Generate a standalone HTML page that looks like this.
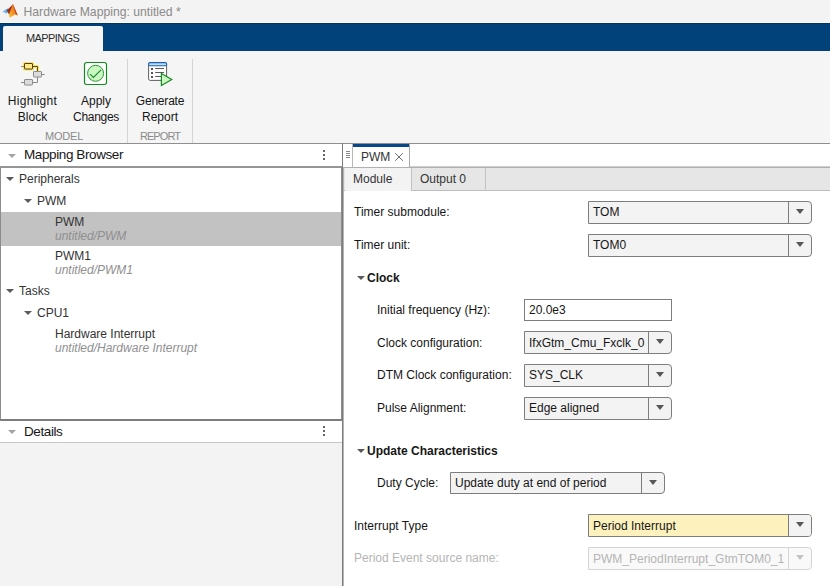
<!DOCTYPE html>
<html><head><meta charset="utf-8">
<style>
*{margin:0;padding:0;box-sizing:border-box}
html,body{width:830px;height:586px;overflow:hidden;background:#f5f5f5;font-family:"Liberation Sans",sans-serif;color:#161616}
.a{position:absolute}
.t{position:absolute;font-size:12px;line-height:14px;white-space:nowrap}
.c{text-align:center}
.tri{position:absolute;width:0;height:0;border-left:4px solid transparent;border-right:4px solid transparent;border-top:4px solid #5a5a5a}
.dd{position:absolute;height:23px;background:#f3f3f3;border:1px solid #7d7d7d;border-radius:0 4px 4px 0}
.dd .dv{position:absolute;top:0;bottom:0;left:auto;width:1px;background:#7d7d7d}
.dd .tr{position:absolute;top:7px;width:0;height:0;border-left:4px solid transparent;border-right:4px solid transparent;border-top:5px solid #575757}
.dd .tx{position:absolute;left:4px;top:3px;font-size:12px;line-height:14px;white-space:nowrap}
.dots{position:absolute;width:2px;height:2px;background:#666;box-shadow:0 4px 0 #666,0 8px 0 #666}
</style></head><body>
<!-- title bar -->
<div class="a" style="left:0;top:0;width:830px;height:22px;background:#f3f3f3"></div>
<svg class="a" style="left:0px;top:0px" width="20" height="20" viewBox="0 0 20 20">
  <defs>
    <linearGradient id="g1" x1="0" y1="1" x2="1" y2="0"><stop offset="0" stop-color="#fbc02d"/><stop offset="0.5" stop-color="#f08a24"/><stop offset="1" stop-color="#d2451c"/></linearGradient>
    <linearGradient id="g2" x1="0" y1="0" x2="1" y2="0"><stop offset="0" stop-color="#8fd0f5"/><stop offset="1" stop-color="#3d8fd0"/></linearGradient>
  </defs>
  <path d="M2.2 11.6 L7.5 8.6 L9.6 10.6 L6.5 13.6 Z" fill="url(#g2)"/>
  <path d="M6.8 10.2 L10.8 6.6 L13 4 L10.6 12.5 L9 14.5 Z" fill="#9c2f1e"/>
  <path d="M9 14.5 L13 4 L15.2 10 L17.8 15.6 L15.2 14.4 L9.6 17.8 Z" fill="url(#g1)"/>
  <path d="M13 4 L17.8 15.6 L15.6 13.8 Z" fill="#c2391b"/>
</svg>
<div class="t" style="left:23.5px;top:5px;color:#8a8a8a;font-size:12.2px">Hardware Mapping: untitled *</div>

<!-- blue toolstrip bar -->
<div class="a" style="left:0;top:22px;width:830px;height:1px;background:#fffdf9"></div>
<div class="a" style="left:0;top:23px;width:830px;height:28px;background:#02427a;border-top:1px solid #00346a"></div>
<div class="a" style="left:3px;top:26px;width:100px;height:25px;background:#f5f5f5;border-radius:2px 2px 0 0"></div>
<div class="t" style="left:26px;top:31px;font-size:11px;color:#2b2b2b;letter-spacing:-0.6px">MAPPINGS</div>

<!-- toolbar icons -->
<svg class="a" style="left:16px;top:56px" width="32" height="32" viewBox="0 0 32 32">
  <g stroke="#ffe23a" stroke-width="3" fill="none" stroke-linejoin="round" opacity="0.85">
    <rect x="8.5" y="7.5" width="8" height="5.5"/>
    <path d="M16.5 10.5 H21.5 V15.5"/>
  </g>
  <g stroke="#8a8a8a" stroke-width="1" fill="none">
    <path d="M5 10.5 H8.5"/><path d="M25.5 18.5 H28.7"/><path d="M5 26.5 H8.5"/>
    <path d="M21.5 21 V26.5 H16.5"/>
  </g>
  <path d="M16.5 10.5 H21.5 V15.5" stroke="#5e4b12" stroke-width="1" fill="none"/>
  <rect x="8.5" y="7.5" width="8" height="5.5" rx="0.5" fill="#ffe98c" stroke="#4e3f10" stroke-width="1"/>
  <rect x="17.5" y="15.5" width="8" height="5.5" rx="0.5" fill="#dcdcdc" stroke="#8c8c8c" stroke-width="1"/>
  <rect x="8.5" y="23.5" width="8" height="5.5" rx="0.5" fill="#dcdcdc" stroke="#8c8c8c" stroke-width="1"/>
</svg>
<div class="t c" style="left:2px;top:94px;width:61px;letter-spacing:0.3px">Highlight</div>
<div class="t c" style="left:2px;top:110px;width:61px">Block</div>

<svg class="a" style="left:80px;top:58px" width="32" height="32" viewBox="0 0 32 32">
  <rect x="4.5" y="4.5" width="22" height="22" rx="2.2" fill="#ffffff" stroke="#0f8a1c" stroke-width="1.15"/>
  <circle cx="15.6" cy="15.3" r="8" fill="#c9f8c1" stroke="#2a9838" stroke-width="1"/>
  <path d="M10.1 16.1 L13.4 19.4 L21 11.9" stroke="#17882a" stroke-width="1.1" fill="none"/>
</svg>
<div class="t c" style="left:66px;top:94px;width:60px">Apply</div>
<div class="t c" style="left:66px;top:110px;width:60px;letter-spacing:-0.3px">Changes</div>

<svg class="a" style="left:144px;top:58px" width="32" height="32" viewBox="0 0 32 32">
  <rect x="4.6" y="4.6" width="18" height="17.8" rx="1.6" fill="#ffffff" stroke="#5f5f5f" stroke-width="1"/>
  <rect x="4.6" y="4.6" width="18" height="3.2" rx="1.4" fill="#b9e1ff" stroke="#1f5fb0" stroke-width="1.1"/>
  <g fill="#555"><rect x="7" y="10" width="2" height="2"/><rect x="7" y="14" width="2" height="2"/><rect x="7" y="18" width="2" height="2"/></g>
  <g stroke="#5a5a5a" stroke-width="1"><path d="M11.2 10.5 H20"/><path d="M11.2 14.5 H20"/><path d="M11.2 18.5 H17.5"/></g>
  <path d="M17.4 15.4 L27.8 21.4 L17.4 27.5 Z" fill="#c9f8c1" stroke="#10891d" stroke-width="1.15" stroke-linejoin="miter"/>
</svg>
<div class="t c" style="left:129px;top:94px;width:62px;letter-spacing:-0.2px">Generate</div>
<div class="t c" style="left:129px;top:110px;width:62px">Report</div>

<div class="a" style="left:127px;top:59px;width:1px;height:84px;background:#d4d4d4"></div>
<div class="a" style="left:192px;top:59px;width:1px;height:84px;background:#d4d4d4"></div>
<div class="t c" style="left:2px;top:129px;width:124px;font-size:11px;color:#8a8a8a;letter-spacing:-0.2px">MODEL</div>
<div class="t c" style="left:128px;top:129px;width:64px;font-size:11px;color:#8a8a8a;letter-spacing:-0.9px">REPORT</div>

<!-- toolbar bottom line -->
<div class="a" style="left:0;top:143px;width:830px;height:1px;background:#8f8f8f"></div>

<!-- left pane -->
<div class="a" style="left:0;top:144px;width:342px;height:22px;background:#fff"></div>
<div class="tri" style="left:8px;top:154px;border-top-color:#a3a3a3"></div>
<div class="a" style="left:24px;top:147px;font-size:13.5px;line-height:16px;letter-spacing:-0.4px;white-space:nowrap">Mapping Browser</div>
<div class="dots" style="left:323px;top:150px"></div>

<div class="a" style="left:0;top:166px;width:343px;height:255px;background:#fff;border:1px solid #8c8c8c;border-top:2px solid #959595;border-bottom:2px solid #7d7d7d;border-right:2px solid #8c8c8c"></div>
<div class="tri" style="left:6px;top:177px"></div>
<div class="t" style="left:19px;top:172px;color:#333">Peripherals</div>
<div class="tri" style="left:24px;top:199px"></div>
<div class="t" style="left:37px;top:194px;color:#333">PWM</div>
<div class="a" style="left:1px;top:212px;width:340px;height:34px;background:#c2c2c2"></div>
<div class="t" style="left:55px;top:215px;color:#333">PWM</div>
<div class="t" style="left:55px;top:229px;color:#8f8f8f;font-style:italic">untitled/PWM</div>
<div class="t" style="left:55px;top:249px;color:#333">PWM1</div>
<div class="t" style="left:55px;top:263px;color:#8f8f8f;font-style:italic">untitled/PWM1</div>
<div class="tri" style="left:6px;top:289px"></div>
<div class="t" style="left:19px;top:284px;color:#333">Tasks</div>
<div class="tri" style="left:24px;top:311px"></div>
<div class="t" style="left:37px;top:306px;color:#333">CPU1</div>
<div class="t" style="left:55px;top:327px;color:#333">Hardware Interrupt</div>
<div class="t" style="left:55px;top:341px;color:#8f8f8f;font-style:italic">untitled/Hardware Interrupt</div>

<!-- details -->
<div class="a" style="left:0;top:421px;width:342px;height:21px;background:#fff"></div>
<div class="a" style="left:0;top:442px;width:342px;height:1px;background:#c8c8c8"></div>
<div class="tri" style="left:8px;top:430px;border-top-color:#a3a3a3"></div>
<div class="a" style="left:24px;top:424px;font-size:13.5px;line-height:16px;letter-spacing:-0.4px;white-space:nowrap">Details</div>
<div class="dots" style="left:323px;top:426px"></div>
<div class="a" style="left:0;top:443px;width:342px;height:143px;background:#f3f3f3"></div>

<!-- divider -->
<div class="a" style="left:342px;top:143px;width:1px;height:443px;background:#7c7c7c"></div>

<!-- right pane -->
<div class="a" style="left:343px;top:144px;width:487px;height:442px;background:#fff"></div>
<div class="a" style="left:346px;top:151px;width:4px;height:1px;background:#888;box-shadow:0 2px 0 #888,0 4px 0 #888,0 6px 0 #888"></div>
<div class="a" style="left:352px;top:144px;width:58px;height:23px;background:#fff;border-left:1px solid #b8b8b8;border-right:1px solid #a8a8a8"></div>
<div class="a" style="left:353px;top:144px;width:56px;height:3px;background:#084889"></div>
<div class="t" style="left:361px;top:150px;color:#333">PWM</div>
<svg class="a" style="left:394px;top:152px" width="10" height="10" viewBox="0 0 10 10"><path d="M1.2 1.2 L8.8 8.8 M8.8 1.2 L1.2 8.8" stroke="#5c5c5c" stroke-width="0.9"/></svg>
<div class="a" style="left:343px;top:167px;width:487px;height:1px;background:#b0b0b0"></div>
<div class="a" style="left:410px;top:166px;width:420px;height:1px;background:#cfcfcf"></div>

<!-- module tabs -->
<div class="a" style="left:344px;top:168px;width:486px;height:23px;background:#e6e6e6;border-bottom:1px solid #bdbdbd"></div>
<div class="a" style="left:345px;top:168px;width:67px;height:23px;background:#f3f3f3;border-right:1px solid #c2c2c2"></div>
<div class="a" style="left:485px;top:168px;width:1px;height:22px;background:#c2c2c2"></div>
<div class="t" style="left:353px;top:172px;color:#333">Module</div>
<div class="t" style="left:420px;top:172px;color:#333">Output 0</div>

<div class="a" style="left:343px;top:168px;width:1px;height:418px;background:#b4b4b4"></div>
<!-- form -->
<div class="t" style="left:354px;top:205px">Timer submodule:</div>
<div class="dd" style="left:588px;top:201px;width:224px"><div class="dv" style="left:199px"></div><div class="tr" style="left:207px"></div><div class="tx">TOM</div></div>
<div class="t" style="left:354px;top:238px">Timer unit:</div>
<div class="dd" style="left:588px;top:234px;width:224px"><div class="dv" style="left:199px"></div><div class="tr" style="left:207px"></div><div class="tx">TOM0</div></div>

<div class="tri" style="left:357px;top:276px"></div>
<div class="t" style="left:367px;top:271px;font-weight:bold">Clock</div>

<div class="t" style="left:377px;top:303px">Initial frequency (Hz):</div>
<div class="a" style="left:524px;top:299px;width:148px;height:22px;background:#fff;border:1px solid #7d7d7d"></div>
<div class="t" style="left:529px;top:303px">20.0e3</div>

<div class="t" style="left:377px;top:336px">Clock configuration:</div>
<div class="dd" style="left:524px;top:331px;width:148px"><div class="dv" style="left:123px"></div><div class="tr" style="left:131px"></div><div class="tx" style="overflow:hidden;width:118px;top:4px">IfxGtm_Cmu_Fxclk_0</div></div>

<div class="t" style="left:377px;top:368px">DTM Clock configuration:</div>
<div class="dd" style="left:524px;top:364px;width:148px"><div class="dv" style="left:123px"></div><div class="tr" style="left:131px"></div><div class="tx">SYS_CLK</div></div>

<div class="t" style="left:377px;top:401px">Pulse Alignment:</div>
<div class="dd" style="left:524px;top:397px;width:148px"><div class="dv" style="left:123px"></div><div class="tr" style="left:131px"></div><div class="tx">Edge aligned</div></div>

<div class="tri" style="left:357px;top:449px"></div>
<div class="t" style="left:367px;top:444px;font-weight:bold">Update Characteristics</div>

<div class="t" style="left:377px;top:476px">Duty Cycle:</div>
<div class="dd" style="left:450px;top:472px;width:215px;height:22px"><div class="dv" style="left:190px"></div><div class="tr" style="left:198px"></div><div class="tx">Update duty at end of period</div></div>

<div class="t" style="left:354px;top:519px">Interrupt Type</div>
<div class="dd" style="left:588px;top:514px;width:224px;background:#fdf1bd"><div class="a" style="left:200px;top:0;right:0;bottom:0;background:#f3f3f3;border-radius:0 3px 3px 0"></div><div class="dv" style="left:199px"></div><div class="tr" style="left:207px"></div><div class="tx" style="top:4px">Period Interrupt</div></div>

<div class="t" style="left:354px;top:551px;color:#b5b5b5">Period Event source name:</div>
<div class="dd" style="left:588px;top:547px;width:224px;background:#f9f9f9;border-color:#d5d5d5"><div class="dv" style="left:199px;background:#d5d5d5"></div><div class="tr" style="left:207px;border-top-color:#c4c4c4"></div><div class="tx" style="color:#b5b5b5;top:4px">PWM_PeriodInterrupt_GtmTOM0_1</div></div>

</body></html>
